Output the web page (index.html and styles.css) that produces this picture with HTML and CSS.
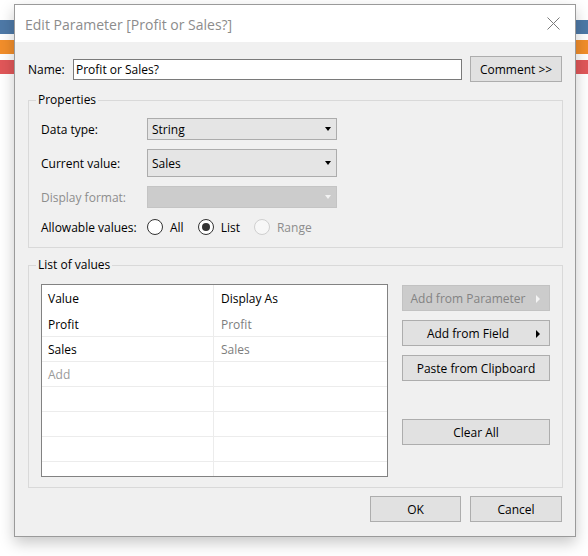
FILE: index.html
```html
<!DOCTYPE html>
<html>
<head>
<meta charset="utf-8">
<link rel="stylesheet" href="styles.css">
</head>
<body>
<div class="desktop">
  <div class="strip blue"></div>
  <div class="strip orange"></div>
  <div class="strip red"></div>

  <div class="dialog">
    <div class="titlebar">
      <span class="title">Edit Parameter [Profit or Sales?]</span>
      <svg class="close" width="13" height="13" viewBox="0 0 13 13"><path d="M0.5 0.5 L12.5 12.5 M12.5 0.5 L0.5 12.5" stroke="#7a7a7a" stroke-width="1" fill="none"/></svg>
    </div>
    <div class="body">
      <div class="name-row">
        <span class="name-label">Name:</span>
        <div class="textbox">Profit or Sales?</div>
        <button class="btn comment">Comment &gt;&gt;</button>
      </div>

      <fieldset class="group props-group">
        <legend>Properties</legend>
        <div class="props">
          <span class="plabel">Data type:</span>
          <div class="combo"><span>String</span><span class="arrow"></span></div>
          <span class="plabel">Current value:</span>
          <div class="combo tall"><span>Sales</span><span class="arrow"></span></div>
          <span class="plabel disabled">Display format:</span>
          <div class="combo off"><span></span><span class="arrow light"></span></div>
          <span class="plabel">Allowable values:</span>
          <div class="radios">
            <span class="radio"></span><span class="rtext">All</span>
            <span class="radio on"></span><span class="rtext">List</span>
            <span class="radio dis"></span><span class="rtext disabled">Range</span>
          </div>
        </div>
      </fieldset>

      <fieldset class="group list-group">
        <legend>List of values</legend>
        <div class="list-wrap">
          <div class="table">
            <div class="tr head"><div class="td">Value</div><div class="td">Display As</div></div>
            <div class="tr"><div class="td">Profit</div><div class="td gray">Profit</div></div>
            <div class="tr"><div class="td">Sales</div><div class="td gray">Sales</div></div>
            <div class="tr"><div class="td light">Add</div><div class="td"></div></div>
            <div class="tr"><div class="td"></div><div class="td"></div></div>
            <div class="tr"><div class="td"></div><div class="td"></div></div>
            <div class="tr"><div class="td"></div><div class="td"></div></div>
            <div class="tr"><div class="td"></div><div class="td"></div></div>
          </div>
          <div class="side">
            <button class="btn wide off has-arrow">Add from Parameter<span class="rarrow light"></span></button>
            <button class="btn wide has-arrow">Add from Field<span class="rarrow"></span></button>
            <button class="btn wide">Paste from Clipboard</button>
            <button class="btn wide clear">Clear All</button>
          </div>
        </div>
      </fieldset>

      <div class="footer">
        <button class="btn ok">OK</button>
        <button class="btn cancel">Cancel</button>
      </div>
    </div>
  </div>
</div>
</body>
</html>
```

FILE: styles.css
```css
* { box-sizing: border-box; }
html, body { margin: 0; padding: 0; background: #ffffff; }
body {
  font-family: "Open Sans", "Noto Sans", "Liberation Sans", sans-serif;
  font-size: 12px;
  color: #000;
}
.desktop {
  position: relative;
  width: 588px;
  height: 556px;
  padding-top: 20px;
  overflow: hidden;
}
.strip { height: 14px; margin-bottom: 6px; }
.strip.blue { background: #4e79a7; }
.strip.orange { background: #f28e2b; }
.strip.red { background: #e15759; }

.dialog {
  position: absolute;
  left: 14px;
  top: 4px;
  width: 562px;
  height: 533px;
  border: 1px solid #9a9a9a;
  background: #f0f0f0;
  box-shadow: 0 6px 14px rgba(0,0,0,0.22);
  display: flex;
  flex-direction: column;
}
.titlebar {
  height: 37px;
  background: #fff;
  display: flex;
  align-items: center;
  padding-left: 10px;
  padding-right: 15px;
}
.title {
  font-size: 14px;
  color: #8c8c8c;
  flex: 1;
  position: relative;
  top: 1px;
}
.close { display: block; }

.body { padding: 14px 12px 0 13px; }

.name-row {
  display: flex;
  align-items: center;
  height: 26px;
}
.name-label { width: 45px; }
.textbox {
  width: 389px;
  height: 21px;
  border: 1px solid #7a7a7a;
  background: #fff;
  padding-left: 2px;
  line-height: 19px;
}
.btn {
  font-family: inherit;
  font-size: 12px;
  color: #000;
  background: #e1e1e1;
  border: 1px solid #adadad;
  height: 26px;
  padding: 0;
  margin: 0;
  display: flex;
  align-items: center;
  justify-content: center;
  position: relative;
}
.btn.has-arrow { padding-right: 16px; }
.comment { width: 92px; margin-left: auto; margin-right: 1px; }

.group {
  margin: 9px 0 0 0;
  padding: 0;
  border: 1px solid #d9d9d9;
  min-width: 0;
}
.group.props-group { margin-top: 10px; }
.group legend {
  margin-left: 7px;
  padding: 0 2px;
  line-height: 16px;
}

.props {
  display: grid;
  grid-template-columns: 106px 190px;
  row-gap: 9px;
  align-items: center;
  padding: 10px 0 10px 12px;
}
.plabel.disabled, .disabled { color: #8d8d8d; }
.combo {
  height: 22px;
  background: #e5e5e5;
  border: 1px solid #acacac;
  display: flex;
  align-items: center;
  justify-content: space-between;
  padding: 0 5px 0 4px;
}
.combo.tall { height: 28px; }
.combo.off { background: #cccccc; border-color: #c4c4c4; }
.arrow {
  width: 0; height: 0;
  border-left: 3.5px solid transparent;
  border-right: 3.5px solid transparent;
  border-top: 4px solid #000;
}
.arrow.light { border-top-color: #f2f2f2; }

.radios { display: flex; align-items: center; height: 20px; }
.radio {
  width: 16px; height: 16px;
  border: 1px solid #333;
  border-radius: 50%;
  background: #fff;
  display: flex;
  align-items: center;
  justify-content: center;
  margin-right: 7px;
}
.radio.on::after {
  content: "";
  width: 8px; height: 8px;
  border-radius: 50%;
  background: #333;
}
.radio.dis { border-color: #cfcfcf; background: #f7f7f7; }
.rtext { margin-right: 14px; }

.list-wrap {
  display: flex;
  padding: 11px 0 10px 12px;
}
.table {
  width: 347px;
  height: 193px;
  border: 1px solid #828282;
  background: #fff;
  overflow: hidden;
}
.tr {
  display: grid;
  grid-template-columns: 172px 1fr;
  height: 25px;
  border-bottom: 1px solid #ececec;
}
.tr.head { height: 27px; border-bottom: none; }
.td {
  border-right: 1px solid #ececec;
  padding-left: 6px;
  display: flex;
  align-items: center;
}
.td:last-child { border-right: none; padding-left: 7px; }
.td.gray { color: #7d7d7d; }
.td.light { color: #9a9a9a; }

.side {
  margin-left: 14px;
  padding-top: 1px;
  display: flex;
  flex-direction: column;
  gap: 9px;
}
.wide { width: 148px; }
.btn.off { background: #cccccc; border-color: #c2c2c2; color: #838383; }
.clear { margin-top: 29px; }
.rarrow {
  position: absolute;
  right: 9px;
  top: 9px;
  width: 0; height: 0;
  border-top: 4px solid transparent;
  border-bottom: 4px solid transparent;
  border-left: 4px solid #000;
}
.rarrow.light { border-left-color: #f4f4f4; }

.footer {
  display: flex;
  justify-content: flex-end;
  gap: 9px;
  margin-top: 8px;
  padding-right: 1px;
}
.ok { width: 91px; }
.cancel { width: 92px; }
```
